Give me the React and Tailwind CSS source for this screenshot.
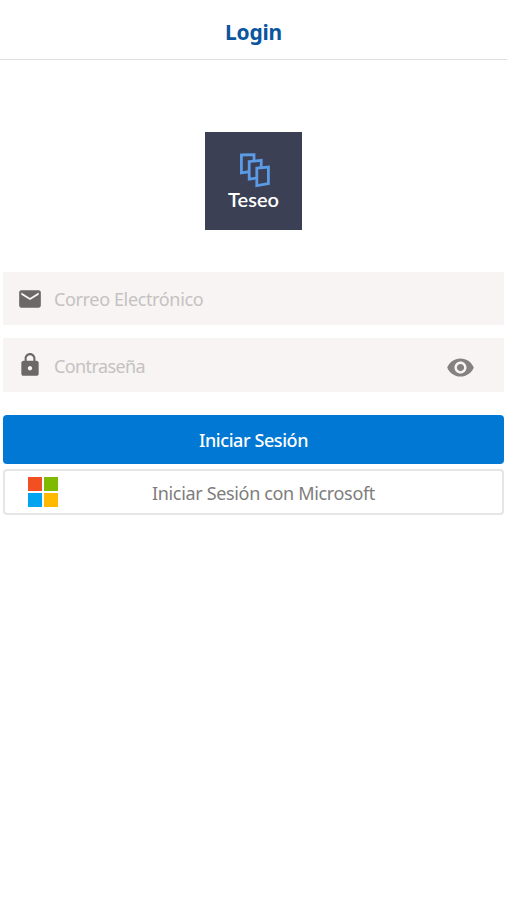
import React, { useState } from "react";
import { MdEmail, MdLock, MdVisibility } from "react-icons/md";

const TeseoLogo = () => {
  return (
    <div className="w-[97px] h-[98px] bg-[#3c4055] flex flex-col items-center self-center">
      <svg
        className="w-8 h-9 mt-5 shrink-0"
        viewBox="0 0 32 36"
        fill="#3c4055"
        stroke="#5b9be6"
        strokeWidth="2.8"
      >
        <path d="M3.4 3 L16 2.6 V19 L3.4 20.8 Z" />
        <path d="M11.2 9.6 L23.2 8.4 V25.2 L11.2 27.2 Z" />
        <path d="M18.8 16.2 L30.4 15 V31.6 L18.8 33.6 Z" />
      </svg>
      <span className="-mt-px text-white font-['Lato'] font-semibold text-[20px] leading-6">
        Teseo
      </span>
    </div>
  );
};

const MicrosoftLogo = () => {
  return (
    <div className="grid grid-cols-2 gap-[1.5px] w-[30px] h-[30px]">
      <div className="bg-[#f25022]" />
      <div className="bg-[#7fba00]" />
      <div className="bg-[#00a4ef]" />
      <div className="bg-[#ffb900]" />
    </div>
  );
};

const App = () => {
  const [email, setEmail] = useState("");
  const [password, setPassword] = useState("");
  const [showPassword, setShowPassword] = useState(false);

  return (
    <div className="min-h-screen bg-white font-['Noto_Sans','Open_Sans',sans-serif]">
      <header className="h-[60px] border-b border-[#e0e0e0] flex items-center justify-center pt-1">
        <h1 className="text-[#0b559f] text-[21px] leading-7 font-bold tracking-[-0.2px]">
          Login
        </h1>
      </header>
      <main className="px-[3px] pt-[72px] flex flex-col">
        <TeseoLogo />
        <div className="mt-[42px] h-[53px] bg-[#f7f4f3] flex items-center pl-3.5">
          <MdEmail className="text-[#6b6867] w-[26px] h-[26px] shrink-0" />
          <input
            className="ml-[11px] pt-0.5 flex-1 min-w-0 bg-transparent outline-none text-[18px] tracking-[-0.36px] text-[#605e5c] placeholder:text-[#c4c2c1]"
            type="email"
            placeholder="Correo Electrónico"
            value={email}
            onChange={(e) => setEmail(e.target.value)}
          />
        </div>
        <div className="mt-[13px] h-[54px] bg-[#f7f4f3] flex items-center pl-3.5 pr-[29px]">
          <MdLock className="text-[#6b6867] w-[26px] h-[26px] shrink-0" />
          <input
            className="ml-[11px] pt-0.5 flex-1 min-w-0 bg-transparent outline-none text-[18px] tracking-[-0.6px] text-[#605e5c] placeholder:text-[#c4c2c1]"
            type={showPassword ? "text" : "password"}
            placeholder="Contraseña"
            value={password}
            onChange={(e) => setPassword(e.target.value)}
          />
          <button className="mt-1" onClick={() => setShowPassword(!showPassword)}>
            <MdVisibility className="text-[#848281] w-[29px] h-[29px]" />
          </button>
        </div>
        <button className="mt-[22.5px] pt-0.5 h-[49px] rounded-[4px] bg-[#0078d4] text-white text-[18px] font-medium tracking-[-0.42px]">
          Iniciar Sesión
        </button>
        <button className="mt-[5.5px] h-[46px] rounded-[4px] border-2 border-[#e6e6e6] flex items-center pl-[23px] pr-[33px]">
          <MicrosoftLogo />
          <span className="flex-1 pt-0.5 text-center text-[#7d7d7d] text-[18px] tracking-[-0.34px]">
            Iniciar Sesión con Microsoft
          </span>
        </button>
      </main>
    </div>
  );
};

export default App;
